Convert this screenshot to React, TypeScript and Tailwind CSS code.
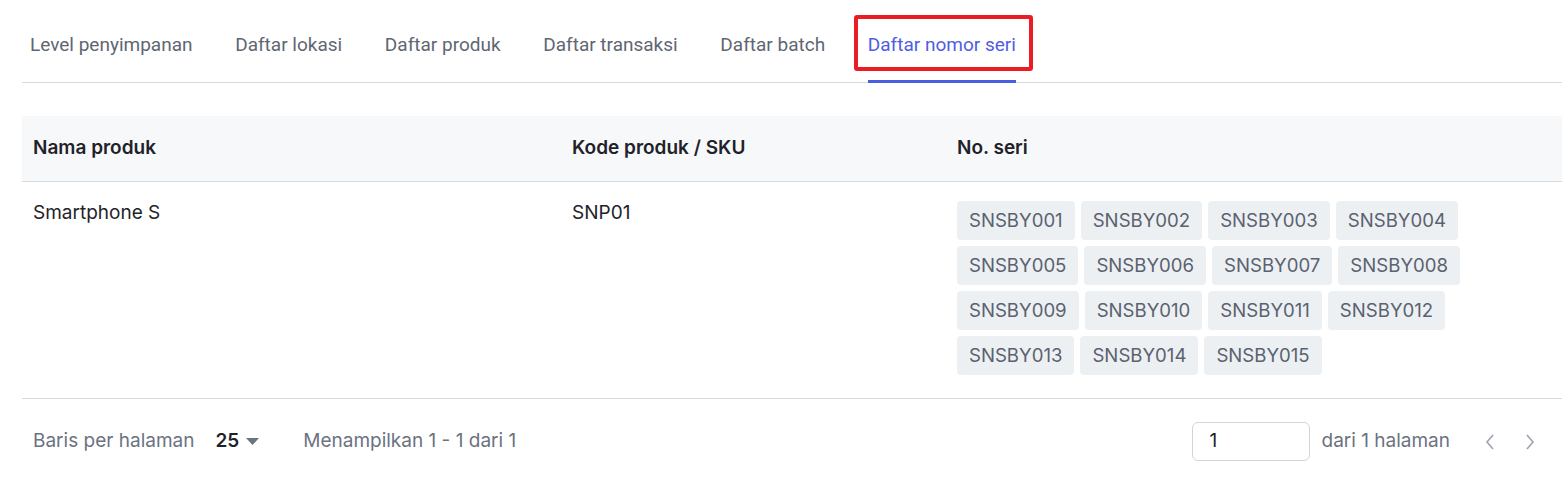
import React from "react";

const tabs = [
  "Level penyimpanan",
  "Daftar lokasi",
  "Daftar produk",
  "Daftar transaksi",
  "Daftar batch",
  "Daftar nomor seri",
];

const serials = Array.from({ length: 15 }, (_, i) => `SNSBY${String(i + 1).padStart(3, "0")}`);

export default function App() {
  return (
    <div className="w-[1568px] h-[499px] bg-white pl-[22px] pr-[6px]" style={{ fontFamily: "Inter, 'Noto Sans', sans-serif" }}>
      {/* Tabs */}
      <div className="h-[83px] border-b border-[#d5dae1] flex items-start gap-[42.7px] pl-[8px]" style={{ fontFamily: "Roboto, sans-serif" }}>
        {tabs.map((t, i) => {
          const active = i === tabs.length - 1;
          return (
            <div key={t} className="relative h-full">
              <div
                className={`mt-[35px] text-[19px] leading-[20px] ${active ? "text-[#4f5de2]" : "text-[#5f6672]"}`}
              >
                {t}
              </div>
              {active && (
                <>
                  <div className="absolute left-0 right-0 bottom-[-1px] h-[3px] bg-[#4a5fe0]" />
                  <div className="absolute left-[-14px] right-[-17px] top-[15px] h-[56px] border-[4px] border-[#ec1c24] rounded-[3px]" />
                </>
              )}
            </div>
          );
        })}
      </div>

      {/* Table */}
      <div className="mt-[33px]">
        <div className="grid grid-cols-[539px_385px_1fr] bg-[#f7f8fa] h-[66px] items-center border-b border-[#d5dae1] text-[19px] font-semibold text-[#1f2329]">
          <div className="pl-[11px]">Nama produk</div>
          <div className="pl-[11px]">Kode produk / SKU</div>
          <div className="pl-[11px]">No. seri</div>
        </div>
        <div className="grid grid-cols-[539px_385px_1fr] border-b border-[#d5dae1] text-[19px] text-[#1f2329] pt-[19px] pb-[23px]">
          <div className="pl-[11px] leading-[24px]">Smartphone S</div>
          <div className="pl-[11px] leading-[24px]">SNP01</div>
          <div className="pl-[11px]">
            <div className="flex flex-wrap gap-x-[6px] gap-y-[6px] w-[540px]">
              {serials.map((s) => (
                <span key={s} className="h-[39px] px-[12px] flex items-center rounded-[4px] bg-[#edf0f3] text-[#5a6270] text-[18.6px]">
                  {s}
                </span>
              ))}
            </div>
          </div>
        </div>
      </div>

      {/* Footer */}
      <div className="flex items-center h-[85px] text-[19px] text-[#6b7280]">
        <span className="pl-[11px]">Baris per halaman</span>
        <span className="ml-[21px] font-semibold text-[#1f2329]">25</span>
        <svg className="ml-[7px]" width="13" height="7" viewBox="0 0 13 7">
          <path d="M0 0 L13 0 L6.5 7 Z" fill="#6b7280" />
        </svg>
        <span className="ml-[44px]">Menampilkan 1 - 1 dari 1</span>
        <div className="flex-1" />
        <div className="w-[118px] h-[39px] border border-[#d1d5db] rounded-[6px] flex items-center pl-[17px] text-[#1f2329]">1</div>
        <span className="ml-[12px]">dari 1 halaman</span>
        <svg className="ml-[34px]" width="12" height="18" viewBox="0 0 12 18" fill="none">
          <path d="M9 2 L3 9 L9 16" stroke="#9ca3af" strokeWidth="1.6" />
        </svg>
        <svg className="ml-[28px] mr-[26px]" width="12" height="18" viewBox="0 0 12 18" fill="none">
          <path d="M3 2 L9 9 L3 16" stroke="#9ca3af" strokeWidth="1.6" />
        </svg>
      </div>
    </div>
  );
}
